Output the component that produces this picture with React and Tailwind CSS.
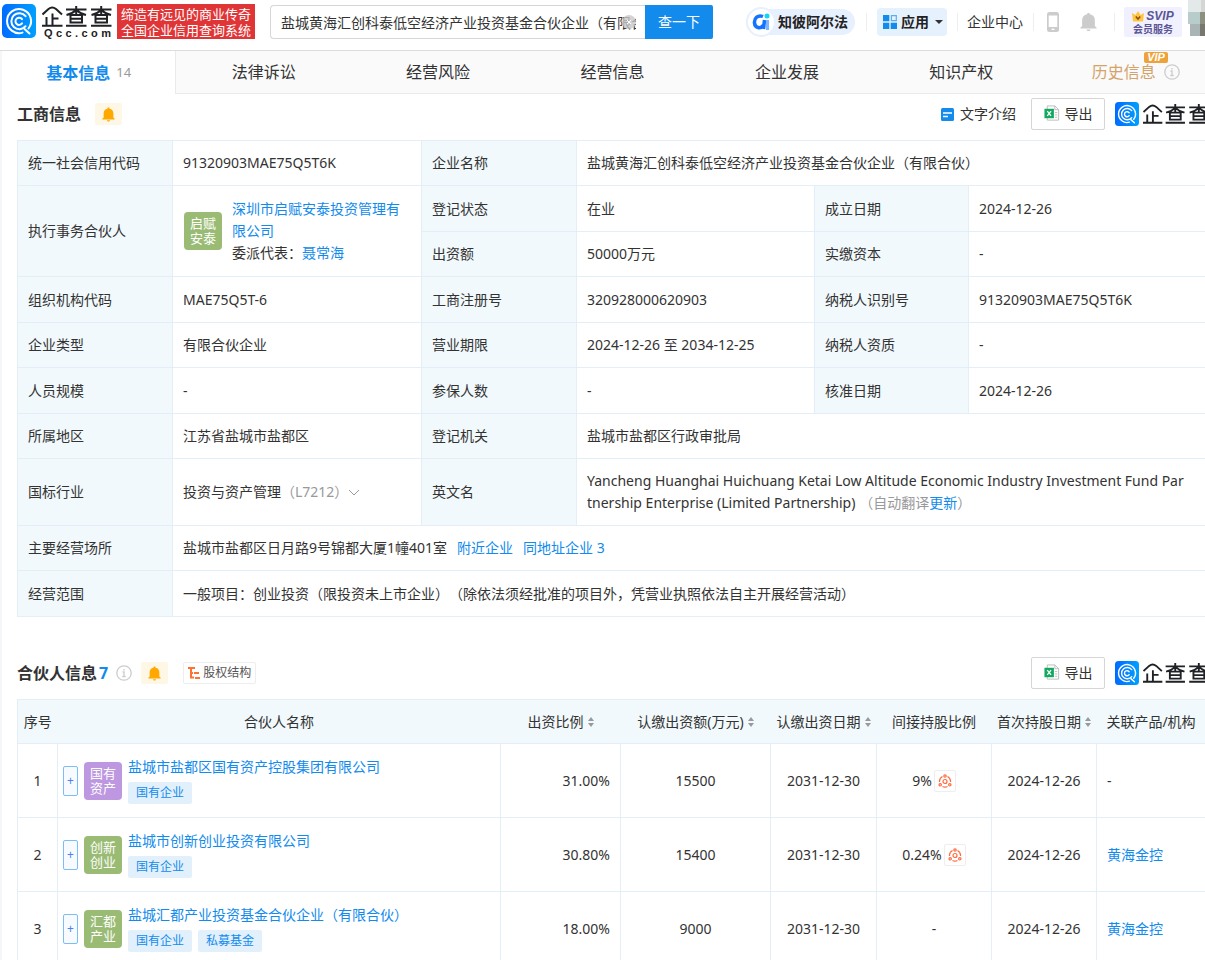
import { useState } from 'react';

function QccMark({ className }) {
  return (
    <svg viewBox="0 0 34 34" className={className} aria-hidden="true">
      <defs>
        <linearGradient id="qccBlue" x1="0" y1="0" x2="1" y2="0">
          <stop offset="0" stopColor="#006bff" />
          <stop offset="1" stopColor="#00a0ff" />
        </linearGradient>
      </defs>
      <rect width="34" height="34" rx="5" fill="url(#qccBlue)" />
      <g fill="none" stroke="#fff" strokeLinecap="round">
        <path d="M26.500 24.500A12 12 0 1 0 20.500 28.600M22.500 25l5 4.500" strokeWidth="2" />
        <path d="M23.600 12.200A8 8 0 1 0 23.600 22.200" strokeWidth="2" />
        <path d="M20 15.200A3.600 3.600 0 1 0 20 19.400" strokeWidth="2" />
      </g>
    </svg>
  );
}

// 企查查 字标
function QccWord({ className }) {
  return (
    <svg viewBox="0 0 70 21" className={className} fill="none" stroke="#1f2124" strokeWidth="2" aria-label="企查查" role="img">
      <path d="M.5 8.500L6.500 3q3.700-3 7.500 0l6 5.500M10.500 7.500v12M4.500 11v8.500M10.500 12.500h6M0 19.800h20.500" />
      <path d="M24 3.500h20.500M34.200 0v8M33.500 4.500q-3 3-9 4.500M35 4.500q3 3 9 4.500M28.500 9h11.500v7.500H28.500zM28.500 12.800H40M24 19.800h20.500" />
      <path d="M49 3.500h20.500M59.200 0v8M58.500 4.500q-3 3-9 4.500M60 4.500q3 3 9 4.500M53.500 9H65v7.500H53.500zM53.500 12.800H65M49 19.800h20.500" />
    </svg>
  );
}

function Bell({ className }) {
  return (
    <svg viewBox="0 0 16 18" className={className} fill="currentColor" aria-hidden="true">
      <path d="M8 .5c.8 0 1.300.5 1.300 1.300C12.300 2.300 14 4.500 14 7.500V13l1.500 1v1.200H.5V14L2 13V7.500C2 4.500 3.700 2.300 6.700 1.800 6.700 1 7.200.5 8 .5zM6 16h4c-.3 1-1 1.500-2 1.500S6.300 17 6 16z" />
    </svg>
  );
}

function InfoIcon({ className }) {
  return (
    <svg viewBox="0 0 16 16" className={className} fill="none" stroke="#ccc" strokeWidth="1.300" aria-hidden="true">
      <circle cx="8" cy="8" r="7.200" />
      <path d="M6.500 7H8v4.500M6.300 11.500h3.400M8 4v1.500" />
    </svg>
  );
}

function BellButton() {
  return (
    <button aria-label="监控提醒" className="flex h-[22px] w-[27px] items-center justify-center rounded-xs bg-[#fff7e6] text-[#ffa800]">
      <Bell className="h-[15px] w-[13px]" />
    </button>
  );
}

function ExportButton() {
  return (
    <button className="flex h-8 w-[74px] items-center justify-center gap-[5px] rounded-xs border border-[#d6d6d6] bg-white text-sm text-[#333]">
      <svg viewBox="0 0 16 18" className="mb-0.5 h-[17px] w-4" aria-hidden="true">
        <path d="M3 1h8l4 4v11H3z" fill="#fff" stroke="#bbb" />
        <path d="M11 1v4h4M11 8h2.500M11 10.500h2.500M11 13h2.500" fill="none" stroke="#bbb" />
        <rect y="4" width="10" height="10" fill="#12a85f" />
        <path d="M3 6.500l4 5M7 6.500l-4 5" stroke="#fff" strokeWidth="1.400" />
      </svg>
      导出
    </button>
  );
}

function SectionLogo() {
  return (
    <div className="flex w-[90px] shrink-0 items-center gap-1 overflow-hidden">
      <QccMark className="h-6 w-6 shrink-0" />
      <QccWord className="h-5 w-[66px] shrink-0" />
    </div>
  );
}

function Avatar({ lines, className }) {
  return (
    <span className={`flex h-[38px] w-[38px] shrink-0 flex-col items-center justify-center rounded text-[13px] leading-[15px] text-white ${className}`}>
      <span>{lines[0]}</span>
      <span>{lines[1]}</span>
    </span>
  );
}

function A({ children, className = '' }) {
  return <a href="#" className={`text-[#128bed] ${className}`}>{children}</a>;
}

function Header() {
  const [keyword, setKeyword] = useState('盐城黄海汇创科泰低空经济产业投资基金合伙企业（有限合伙）');

  return (
    <header className="flex h-[51px] items-start border-b border-[#dcdcdc] bg-white">
      <a href="#" className="ml-0.5 mt-1 flex shrink-0 gap-1.5">
        <QccMark className="h-[34px] w-[34px]" />
        <span className="flex w-[71px] flex-col">
          <QccWord className="mt-0.5 h-[21px] w-[70px]" />
          <span className="mt-px flex justify-between px-0.5 font-['Liberation_Sans',sans-serif] text-[11px] font-bold leading-[11px] text-[#222]">
            {'Qcc.com'.split('').map((c, i) => <span key={i}>{c}</span>)}
          </span>
        </span>
      </a>
      <div className="ml-1 mt-1 h-[35px] w-[138px] shrink-0 bg-[#e03537] pt-0.5 text-center text-[13px] leading-4 text-white">
        <div className="whitespace-nowrap">缔造有远见的商业传奇</div>
        <div className="whitespace-nowrap">全国企业信用查询系统</div>
      </div>

      <form className="ml-[15px] mt-[5px] flex h-[34px] w-[443px] shrink-0" onSubmit={(e) => e.preventDefault()}>
        <div className="relative flex-1">
          <input
            aria-label="搜索企业"
            value={keyword}
            onChange={(e) => setKeyword(e.target.value)}
            className="h-full w-full rounded-l border border-r-0 border-[#d6d6d6] pl-[10px] pr-[9px] text-sm text-[#333] outline-none"
          />
          <button type="button" aria-label="清空" onClick={() => setKeyword('')} className="absolute right-[9px] top-[10px] flex h-[14px] w-[14px] items-center justify-center rounded-full bg-[#c8c8c8]/80">
            <svg viewBox="0 0 6 6" className="h-1.5 w-1.5" stroke="#fff" aria-hidden="true"><path d="M1 1l4 4M5 1L1 5" /></svg>
          </button>
        </div>
        <button className="w-[68px] rounded-r-xs bg-[#128bed] text-sm text-white">查一下</button>
      </form>

      <nav className="ml-[33px] mt-[7px] flex h-[30px] min-w-0 flex-1 items-center text-sm text-[#333]">
        <a href="#" className="flex h-[26px] w-[109px] shrink-0 items-center gap-1 rounded-full bg-[#e6f0ff] font-bold text-[#222]">
          <span className="flex h-[30px] w-[30px] shrink-0 items-center justify-center rounded-full border-2 border-[#e6f0ff] bg-white">
            <svg viewBox="0 0 18 18" className="h-[18px] w-[18px]" fill="none" strokeWidth="3.500" aria-hidden="true">
              <path d="M11 3.500C6 1.500 2 5 2.500 10s6 6.500 9 2" stroke="#1473ff" />
              <path d="M12.500 7l-1 9" stroke="#1473ff" />
              <path d="M15.500 7v10" stroke="#7db7ff" strokeWidth="3" />
              <circle cx="15" cy="3" r="2.500" fill="#13d3ff" />
            </svg>
          </span>
          <span className="-ml-0.5 whitespace-nowrap">知彼阿尔法</span>
        </a>
        <span className="ml-[11px] h-[18px] w-px bg-[#eee]" />
        <button className="ml-[10px] flex h-7 w-[70px] shrink-0 items-center rounded bg-[#e5f1fd] pl-1.5 font-bold text-[#222]">
          <svg viewBox="0 0 14 14" className="mr-1 h-[14px] w-[14px]" fill="#128bed" aria-hidden="true">
            <path d="M0 0h6.300v6.300H0zM0 7.700h6.300V14H0zM7.700 7.700H14V14H7.700z" />
            <path d="M8.400.7h4.900v4.900H8.400z" fill="none" stroke="#5aaef3" strokeWidth="1.200" />
          </svg>
          应用
          <svg viewBox="0 0 8 4" className="ml-1.5 h-1 w-2" fill="#333" aria-hidden="true"><path d="M0 0h8L4 4z" /></svg>
        </button>
        <span className="ml-[10px] h-[18px] w-px bg-[#eee]" />
        <a href="#" className="ml-[9px] whitespace-nowrap">企业中心</a>
        <span className="ml-[10px] h-[18px] w-px bg-[#eee]" />
        <svg viewBox="0 0 12 20" className="ml-[13px] h-5 w-3 shrink-0" aria-hidden="true">
          <rect width="12" height="20" rx="2.500" fill="#ccc" />
          <path d="M1.700 3.500h8.600v11.500H1.700z" fill="#fff" />
          <path d="M4.500 17.300h3" stroke="#fff" strokeWidth="1.300" />
        </svg>
        <Bell className="ml-[21px] h-5 w-[17px] shrink-0 text-[#ccc]" />
        <span className="ml-[17px] h-[18px] w-px bg-[#eee]" />
        <a href="#" className="ml-[9px] flex h-[30px] w-[58px] shrink-0 flex-col items-center justify-center rounded-xs bg-[#f1f0ff] font-bold text-[#5b5595]">
          <span className="flex items-center gap-0.5 font-['Liberation_Sans',sans-serif] text-xs italic leading-[14px]">
            <svg viewBox="0 0 12 11" className="h-[11px] w-3" aria-hidden="true">
              <path d="M0 2l3.500 2L6 0l2.500 4L12 2l-1 8.500H1z" fill="#ffc53d" />
              <path d="M3.800 5.500L6 8l2.200-2.500" fill="none" stroke="#8a4b12" strokeWidth="1.500" />
            </svg>
            SVIP
          </span>
          <span className="whitespace-nowrap text-[10px] leading-3">会员服务</span>
        </a>
      </nav>
      <svg viewBox="0 0 18 36" className="h-9 w-[18px] shrink-0" aria-hidden="true">
        <path d="M1 0h17v12H1z" fill="#e3e9e8" />
        <path d="M14 0h4v12h-4z" fill="#d3d6d5" />
        <path d="M1 12h12v12H1z" fill="#b8cccb" />
        <path d="M13 12h5v12h-5z" fill="#8b9080" />
        <path d="M3 24h10v12H3z" fill="#a9b5b5" />
        <path d="M13 24h5v12h-5z" fill="#77776f" />
      </svg>
    </header>
  );
}

const tabs = ['法律诉讼', '经营风险', '经营信息', '企业发展', '知识产权'];

function Tabs() {
  return (
    <nav className="-mr-[18px] grid h-[43px] grid-cols-7 text-base text-[#333]">
      <a href="#" className="flex items-center justify-center gap-1.5 border-r border-[#eaeaea] bg-white font-bold text-[#128bed]">
        基本信息 <span className="text-[13px] font-normal text-[#999]">14</span>
      </a>
      {tabs.map((tab) => (
        <a key={tab} href="#" className="flex items-center justify-center border-b border-[#eaeaea] bg-[#fafafa]">
          {tab}
        </a>
      ))}
      <a href="#" className="relative flex items-center justify-center gap-2 border-b border-[#eaeaea] bg-[#fafafa] text-[#d3a36b]">
        历史信息
        <InfoIcon className="h-4 w-4" />
        <span className="absolute right-[55px] top-px h-[11px] w-6 rounded-xs bg-[#eea23b] text-center font-['Liberation_Sans',sans-serif] text-[11px] font-bold italic leading-[11px] text-white">
          VIP
        </span>
      </a>
    </nav>
  );
}

const tdBase = 'border border-[#e4eef6] px-[10px] py-[11px]';

function Th({ children, ...rest }) {
  return (
    <th scope="row" className={`${tdBase} bg-[#f2f9fc] text-left font-normal`} {...rest}>
      {children}
    </th>
  );
}

function Td({ children, ...rest }) {
  return <td className={tdBase} {...rest}>{children}</td>;
}

// 偶数行高 1px
function Row({ children }) {
  return <tr className="even:h-[46px]">{children}</tr>;
}

function CompanyInfo() {
  return (
    <section>
      <div className="flex h-[46px] items-center pb-1.5">
        <h2 className="text-base font-bold text-[#333]">工商信息</h2>
        <div className="ml-[14px]"><BellButton /></div>
        <a href="#" className="ml-auto mr-[15px] flex items-center gap-1.5 text-sm text-[#333]">
          <svg viewBox="0 0 13 13" className="h-[13px] w-[13px]" aria-hidden="true">
            <rect width="13" height="13" rx="1.500" fill="#128bed" />
            <path d="M2 5h9M2 8.500h5" stroke="#fff" strokeWidth="1.300" />
          </svg>
          文字介绍
        </a>
        <div className="mr-[10px]"><ExportButton /></div>
        <SectionLogo />
      </div>

      <div className="-mr-px">
        <table className="w-full table-fixed border-collapse text-sm leading-[22px] text-[#333]">
          <colgroup>
            <col className="w-[155px]" />
            <col className="w-[249px]" />
            <col className="w-[155px]" />
            <col className="w-[238px]" />
            <col className="w-[154px]" />
            <col />
          </colgroup>
          <tbody>
            <Row>
              <Th>统一社会信用代码</Th>
              <Td>91320903MAE75Q5T6K</Td>
              <Th>企业名称</Th>
              <Td colSpan={3}>盐城黄海汇创科泰低空经济产业投资基金合伙企业（有限合伙）</Td>
            </Row>
            <Row>
              <Th rowSpan={2}>执行事务合伙人</Th>
              <Td rowSpan={2}>
                <div className="flex items-center gap-[10px]">
                  <Avatar lines={['启赋', '安泰']} className="ml-px bg-[#99bb74]" />
                  <div>
                    <A>深圳市启赋安泰投资管理有限公司</A>
                    <div>委派代表：<A>聂常海</A></div>
                  </div>
                </div>
              </Td>
              <Th>登记状态</Th>
              <Td>在业</Td>
              <Th>成立日期</Th>
              <Td>2024-12-26</Td>
            </Row>
            <Row>
              <Th>出资额</Th>
              <Td>50000万元</Td>
              <Th>实缴资本</Th>
              <Td>-</Td>
            </Row>
            <Row>
              <Th>组织机构代码</Th>
              <Td>MAE75Q5T-6</Td>
              <Th>工商注册号</Th>
              <Td>320928000620903</Td>
              <Th>纳税人识别号</Th>
              <Td>91320903MAE75Q5T6K</Td>
            </Row>
            <Row>
              <Th>企业类型</Th>
              <Td>有限合伙企业</Td>
              <Th>营业期限</Th>
              <Td>2024-12-26 至 2034-12-25</Td>
              <Th>纳税人资质</Th>
              <Td>-</Td>
            </Row>
            <Row>
              <Th>人员规模</Th>
              <Td>-</Td>
              <Th>参保人数</Th>
              <Td>-</Td>
              <Th>核准日期</Th>
              <Td>2024-12-26</Td>
            </Row>
            <Row>
              <Th>所属地区</Th>
              <Td>江苏省盐城市盐都区</Td>
              <Th>登记机关</Th>
              <Td colSpan={3}>盐城市盐都区行政审批局</Td>
            </Row>
            <Row>
              <Th>国标行业</Th>
              <Td>
                <span className="flex items-center">
                  投资与资产管理<span className="text-[#999]">（L7212）</span>
                  <svg viewBox="0 0 12 7" className="h-[7px] w-3" fill="none" stroke="#999" aria-hidden="true"><path d="M1 1l5 5 5-5" /></svg>
                </span>
              </Td>
              <Th>英文名</Th>
              <Td colSpan={3}>
                <div>Yancheng Huanghai Huichuang Ketai Low Altitude Economic Industry Investment Fund Par</div>
                <div className="flex gap-1">
                  <span>tnership Enterprise (Limited Partnership)</span>
                  <span className="text-[#999]">（自动翻译<A>更新</A>）</span>
                </div>
              </Td>
            </Row>
            <Row>
              <Th>主要经营场所</Th>
              <Td colSpan={5}>
                盐城市盐都区日月路9号锦都大厦1幢401室
                <A className="ml-[10px]">附近企业</A>
                <A className="ml-[10px]">同地址企业 3</A>
              </Td>
            </Row>
            <Row>
              <Th>经营范围</Th>
              <Td colSpan={5}>一般项目：创业投资（限投资未上市企业）（除依法须经批准的项目外，凭营业执照依法自主开展经营活动）</Td>
            </Row>
          </tbody>
        </table>
      </div>
    </section>
  );
}

const partners = [
  { name: '盐城市盐都区国有资产控股集团有限公司', short: ['国有', '资产'], color: 'bg-[#bd97e0]', tags: ['国有企业'], ratio: '31.00%', amount: '15500', indirect: '9%', product: '-' },
  { name: '盐城市创新创业投资有限公司', short: ['创新', '创业'], color: 'bg-[#99bb74]', tags: ['国有企业'], ratio: '30.80%', amount: '15400', indirect: '0.24%', product: '黄海金控' },
  { name: '盐城汇都产业投资基金合伙企业（有限合伙）', short: ['汇都', '产业'], color: 'bg-[#99bb74]', tags: ['国有企业', '私募基金'], ratio: '18.00%', amount: '9000', indirect: '-', product: '黄海金控' },
];

const columns = [
  { title: '序号' },
  { title: '合伙人名称' },
  { title: '出资比例', sort: true },
  { title: '认缴出资额(万元)', sort: true },
  { title: '认缴出资日期', sort: true },
  { title: '间接持股比例' },
  { title: '首次持股日期', sort: true },
  { title: '关联产品/机构' },
];

function SortButton({ label }) {
  return (
    <button aria-label={`${label}排序`} className="ml-1">
      <svg viewBox="0 0 6 10" className="h-[10px] w-1.5" fill="#999" aria-hidden="true">
        <path d="M0 4l3-4 3 4zM0 6h6l-3 4z" />
      </svg>
    </button>
  );
}

function PathIcon() {
  return (
    <button aria-label="持股路径" className="ml-[2px] flex h-[22px] w-[22px] items-center justify-center rounded-xs border border-[#eee]">
      <svg viewBox="0 0 14 14" className="h-[14px] w-[14px]" fill="none" stroke="#ff6a3d" strokeWidth="1.200" aria-hidden="true">
        <circle cx="7" cy="7.500" r="2" />
        <path d="M4.500 2.500A5.800 5.800 0 0 0 1.500 8M9.500 2.500a5.800 5.800 0 0 1 3 5.500M4.500 12.500a5.800 5.800 0 0 0 5 0" />
        <circle cx="7" cy="2" r="1.200" />
        <circle cx="2.200" cy="10.800" r="1.200" />
        <circle cx="11.800" cy="10.800" r="1.200" />
      </svg>
    </button>
  );
}

function Partners() {
  const cell = 'border border-[#e4eef6] px-[10px] text-center';

  return (
    <section className="mt-[34px]">
      <div className="flex h-12 items-center pb-1">
        <h2 className="text-base font-bold text-[#333]">合伙人信息<span className="ml-0.5 text-[#128bed]">7</span></h2>
        <InfoIcon className="ml-2 h-4 w-4" />
        <div className="ml-[9px]"><BellButton /></div>
        <button className="ml-[15px] flex h-[22px] items-center gap-[3px] rounded-xs border border-[#eee] px-1 text-xs text-[#555]">
          <svg viewBox="0 0 12 12" className="h-3 w-3" fill="none" stroke="#ff7230" strokeWidth="2" aria-hidden="true">
            <path d="M0 1h7M3 1v9.500h3M3 6h2M6 6h5M7 11h5" />
          </svg>
          股权结构
        </button>
        <div className="ml-auto mr-[10px]"><ExportButton /></div>
        <SectionLogo />
      </div>

      <div className="-mr-px">
        <table className="w-full table-fixed border-collapse text-sm leading-[22px] text-[#333]">
          <colgroup>
            <col className="w-10" />
            <col />
            <col className="w-[120px]" />
            <col className="w-[150px]" />
            <col className="w-[106px]" />
            <col className="w-[115px]" />
            <col className="w-[105px]" />
            <col className="w-[109px]" />
          </colgroup>
          <thead>
            <tr className="h-11 bg-[#f2f9fc]">
              {columns.map((c) => (
                <th key={c.title} scope="col" className="whitespace-nowrap border-y border-[#e4eef6] px-0 text-center font-normal first:border-l">
                  {c.title}
                  {c.sort && <SortButton label={c.title} />}
                </th>
              ))}
            </tr>
          </thead>
          <tbody>
            {partners.map((p, i) => (
              <tr key={p.name} className="h-[74px]">
                <td className={cell}>{i + 1}</td>
                <td className="border border-[#e4eef6] px-[5px]">
                  <div className="flex items-center">
                    <button aria-label="展开" className="mr-1.5 flex h-[30px] w-[15px] shrink-0 items-center justify-center rounded-xs border border-[#7dbdf5] bg-[#f7fbff] text-xs text-[#4a80f0]">+</button>
                    <Avatar lines={p.short} className={p.color} />
                    <div className="ml-1.5 pb-0.5">
                      <A>{p.name}</A>
                      <div className="mt-1 flex gap-1.5">
                        {p.tags.map((tag) => (
                          <span key={tag} className="h-[22px] rounded-xs bg-[#e2f0fc] px-2 text-xs leading-[22px] text-[#128bed]">{tag}</span>
                        ))}
                      </div>
                    </div>
                  </div>
                </td>
                <td className="border border-[#e4eef6] px-[10px] text-right">{p.ratio}</td>
                <td className={cell}>{p.amount}</td>
                <td className={cell}>2031-12-30</td>
                <td className={cell}>
                  <div className="flex items-center justify-center">
                    {p.indirect}
                    {p.indirect !== '-' && <PathIcon />}
                  </div>
                </td>
                <td className={cell}>2024-12-26</td>
                <td className="border border-[#e4eef6] px-[10px]">
                  {p.product === '-' ? '-' : <A>{p.product}</A>}
                </td>
              </tr>
            ))}
          </tbody>
        </table>
      </div>
    </section>
  );
}

export default function App() {
  return (
    <div className="h-screen overflow-hidden bg-[#f5f6f8] font-['Noto_Sans','Noto_Sans_CJK_SC',sans-serif] [text-spacing-trim:space-all]">
      <Header />
      <main className="ml-0.5 bg-white">
        <Tabs />
        <div className="pl-[15px]">
          <CompanyInfo />
          <Partners />
        </div>
      </main>
    </div>
  );
}
